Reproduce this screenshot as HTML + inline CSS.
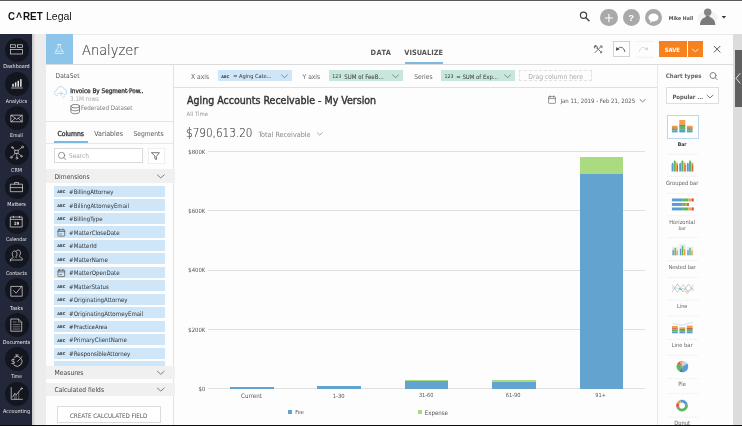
<!DOCTYPE html><html><head><meta charset="utf-8"><title>Analyzer</title><style>
*{box-sizing:border-box;margin:0;padding:0}
html,body{width:742px;height:426px;overflow:hidden;background:#fdfdfd;font-family:'DejaVu Sans Condensed','Liberation Sans',sans-serif;color:#444}
.a{position:absolute;white-space:nowrap}
.t{position:absolute;white-space:nowrap;line-height:1;transform:translateY(-50%)}
svg{position:absolute;overflow:visible}
</style></head><body><div id="root" style="position:absolute;left:0;top:0;width:742px;height:426px;will-change:transform">
<div class="a" style="left:0;top:0;width:742px;height:1px;background:#5a5a5a"></div>
<div class="a" style="left:0;top:424.6px;width:742px;height:1.4px;background:#0c0c0c"></div>
<div class="a" style="left:32px;top:34px;width:710px;height:1px;background:#ebebeb"></div>
<div class="t" id="t0" style="left:7.80px;top:16.30px;font-size:10.6px;color:#111;font-weight:bold;font-family:'Liberation Sans',sans-serif;letter-spacing:0.000px;transform-origin:0 50%;transform:translateY(-50%) scaleX(0.9143);">C</div>
<div class="t" id="t1" style="left:15.70px;top:17.40px;font-size:13.5px;color:#111;font-weight:bold;font-family:'Liberation Sans',sans-serif;letter-spacing:0.000px;transform-origin:0 50%;transform:translateY(-50%) scaleX(0.7731);">^</div>
<div class="t" id="t2" style="left:22.90px;top:16.30px;font-size:10.6px;color:#111;font-weight:bold;font-family:'Liberation Sans',sans-serif;letter-spacing:0.000px;transform-origin:0 50%;transform:translateY(-50%) scaleX(0.9298);">RET</div>
<div class="t" id="t3" style="left:46.00px;top:16.30px;font-size:10.6px;color:#111;font-family:'Liberation Sans',sans-serif;letter-spacing:0.000px;transform-origin:0 50%;transform:translateY(-50%) scaleX(0.9914);">Legal</div>
<div class="a" style="left:0;top:34px;width:32px;height:391px;background:#222839"></div>
<div class="a" style="left:32px;top:34px;width:3px;height:391px;background:linear-gradient(90deg,#c8c8c8,#e6e6e6)"></div>
<div class="a" style="left:35px;top:34px;width:11px;height:391px;background:#ececec"></div>
<div class="a" style="left:4.5px;top:37.60px;width:24px;height:24px;border-radius:50%;background:#13161e"></div>
<div class="t" id="t4" style="left:16.50px;top:67.00px;font-size:5.4px;color:#e8e8e8;letter-spacing:0.000px;transform:translate(-50%,-50%);">Dashboard</div>
<div class="a" style="left:4.5px;top:72.00px;width:24px;height:24px;border-radius:50%;background:#13161e"></div>
<div class="t" id="t5" style="left:16.50px;top:101.60px;font-size:5.25px;color:#e8e8e8;letter-spacing:0.000px;transform:translate(-50%,-50%);">Analytics</div>
<div class="a" style="left:4.5px;top:106.40px;width:24px;height:24px;border-radius:50%;background:#13161e"></div>
<div class="t" id="t6" style="left:16.50px;top:135.90px;font-size:5.13px;color:#e8e8e8;letter-spacing:0.000px;transform:translate(-50%,-50%);">Email</div>
<div class="a" style="left:4.5px;top:140.80px;width:24px;height:24px;border-radius:50%;background:#13161e"></div>
<div class="t" id="t7" style="left:16.50px;top:170.60px;font-size:5.42px;color:#e8e8e8;letter-spacing:0.000px;transform:translate(-50%,-50%);">CRM</div>
<div class="a" style="left:4.5px;top:175.20px;width:24px;height:24px;border-radius:50%;background:#13161e"></div>
<div class="t" id="t8" style="left:16.50px;top:205.00px;font-size:5.44px;color:#e8e8e8;letter-spacing:0.000px;transform:translate(-50%,-50%);">Matters</div>
<div class="a" style="left:4.5px;top:209.60px;width:24px;height:24px;border-radius:50%;background:#13161e"></div>
<div class="t" id="t9" style="left:16.50px;top:240.40px;font-size:5.17px;color:#e8e8e8;letter-spacing:0.000px;transform:translate(-50%,-50%);">Calendar</div>
<div class="a" style="left:4.5px;top:244.00px;width:24px;height:24px;border-radius:50%;background:#13161e"></div>
<div class="t" id="t10" style="left:16.50px;top:273.80px;font-size:5.27px;color:#e8e8e8;letter-spacing:0.000px;transform:translate(-50%,-50%);">Contacts</div>
<div class="a" style="left:4.5px;top:278.40px;width:24px;height:24px;border-radius:50%;background:#13161e"></div>
<div class="t" id="t11" style="left:16.50px;top:308.60px;font-size:5.36px;color:#e8e8e8;letter-spacing:0.000px;transform:translate(-50%,-50%);">Tasks</div>
<div class="a" style="left:4.5px;top:312.80px;width:24px;height:24px;border-radius:50%;background:#13161e"></div>
<div class="t" id="t12" style="left:16.50px;top:343.00px;font-size:5.35px;color:#e8e8e8;letter-spacing:0.000px;transform:translate(-50%,-50%);">Documents</div>
<div class="a" style="left:4.5px;top:347.20px;width:24px;height:24px;border-radius:50%;background:#13161e"></div>
<div class="t" id="t13" style="left:16.50px;top:377.40px;font-size:5.01px;color:#e8e8e8;letter-spacing:0.000px;transform:translate(-50%,-50%);">Time</div>
<div class="a" style="left:4.5px;top:381.60px;width:24px;height:24px;border-radius:50%;background:#13161e"></div>
<div class="t" id="t14" style="left:16.50px;top:411.90px;font-size:5.36px;color:#e8e8e8;letter-spacing:0.000px;transform:translate(-50%,-50%);">Accounting</div>
<div class="a" style="left:45.5px;top:34.2px;width:27.5px;height:29.8px;background:#8dc4ea"></div>
<div class="t" id="t15" style="left:82.40px;top:50.20px;font-size:14.6px;color:#444;font-family:'DejaVu Sans Light','DejaVu Sans','Liberation Sans',sans-serif;letter-spacing:0.000px;transform-origin:0 50%;transform:translateY(-50%) scaleX(0.8911);-webkit-text-stroke:0.18px #4a4a4a;">Analyzer</div>
<div class="a" style="left:46px;top:64px;width:687px;height:1px;background:#dcdcdc"></div>
<div class="t" id="t16" style="left:370.60px;top:53.20px;font-size:7.36px;color:#555;font-weight:bold;letter-spacing:0.366px;">DATA</div>
<div class="t" id="t17" style="left:404.30px;top:53.20px;font-size:7.36px;color:#555;font-weight:bold;letter-spacing:0.013px;">VISUALIZE</div>
<div class="a" style="left:404.5px;top:62px;width:38.5px;height:2px;background:#7db8e2"></div>
<div class="a" style="left:732.6px;top:34px;width:9.4px;height:391px;background:#dcdcdc"></div>
<div class="a" style="left:735px;top:49.9px;width:7px;height:57px;background:#606060"></div>
<div class="a" style="left:612.8px;top:41.4px;width:16.9px;height:15.9px;border:1px solid #d2d2d2;background:#fff"></div>
<div class="a" style="left:658.8px;top:41.4px;width:28px;height:15.5px;background:#f5821f"></div>
<div class="a" style="left:687.8px;top:41.4px;width:15.5px;height:15.5px;background:#f5821f"></div>
<div class="t" id="t18" style="left:672.30px;top:50.50px;font-size:5.88px;color:#fff;font-weight:bold;letter-spacing:-0.000px;transform:translate(-50%,-50%);">SAVE</div>
<div class="a" style="left:600.4px;top:9.200000000000001px;width:17.2px;height:17.2px;border-radius:50%;background:#a9a9a9"></div>
<div class="a" style="left:622.6px;top:9.200000000000001px;width:17.2px;height:17.2px;border-radius:50%;background:#a9a9a9"></div>
<div class="a" style="left:644.8px;top:9.200000000000001px;width:17.2px;height:17.2px;border-radius:50%;background:#a9a9a9"></div>
<div class="t" id="t19" style="left:668.80px;top:18.90px;font-size:5.22px;color:#505050;font-weight:bold;letter-spacing:-0.012px;">Mike Hall</div>
<div class="a" style="left:172.5px;top:65px;width:1px;height:360px;background:#e2e2e2"></div>
<div class="t" id="t20" style="left:55.60px;top:75.70px;font-size:6.6px;color:#555;letter-spacing:0.000px;">DataSet</div>
<div class="t" id="t21" style="left:70.20px;top:90.70px;font-size:6.35px;color:#333;letter-spacing:0.000px;-webkit-text-stroke:0.3px #333;">Invoice By Segment Pow..</div>
<div class="t" id="t22" style="left:70.00px;top:99.00px;font-size:6.32px;color:#aaa;letter-spacing:0.000px;">3.1M rows</div>
<div class="t" id="t23" style="left:81.00px;top:107.50px;font-size:6.17px;color:#777;letter-spacing:0.000px;">Federated Dataset</div>
<div class="a" style="left:46px;top:121px;width:127px;height:1px;background:#e4e4e4"></div>
<div class="t" id="t24" style="left:57.40px;top:133.60px;font-size:6.8px;color:#333;letter-spacing:0.000px;-webkit-text-stroke:0.3px #333;">Columns</div>
<div class="t" id="t25" style="left:94.30px;top:133.60px;font-size:7.01px;color:#555;letter-spacing:-0.000px;">Variables</div>
<div class="t" id="t26" style="left:133.40px;top:133.60px;font-size:6.69px;color:#555;letter-spacing:0.000px;">Segments</div>
<div class="a" style="left:54px;top:140.5px;width:34px;height:2px;background:#7db8e2"></div>
<div class="a" style="left:46px;top:142.5px;width:127px;height:1px;background:#e8e8e8"></div>
<div class="a" style="left:54px;top:148.2px;width:89.4px;height:15.3px;border:1px solid #dadada;background:#fff"></div>
<div class="t" id="t27" style="left:69.00px;top:156.00px;font-size:6.48px;color:#aaa;letter-spacing:0.000px;">Search</div>
<div class="a" style="left:147.5px;top:148px;width:17px;height:15.5px;border:1px solid #efefef;background:#fff"></div>
<div class="a" style="left:46px;top:169.4px;width:129px;height:13.6px;background:#f0f0f0"></div>
<div class="t" id="t28" style="left:54.50px;top:177.20px;font-size:6.68px;color:#444;letter-spacing:0.000px;">Dimensions</div>
<div class="a" style="left:54px;top:185.80px;width:111px;height:11.3px;background:#cfe6f8"></div>
<div class="t" id="t29" style="left:69.10px;top:191.90px;font-size:6.03px;color:#333;letter-spacing:0.000px;">#BillingAttorney</div>
<div class="t" id="t30" style="left:57.30px;top:191.90px;font-size:3.91px;color:#333;font-weight:bold;letter-spacing:0.000px;">ABC</div>
<div class="a" style="left:54px;top:199.28px;width:111px;height:11.3px;background:#cfe6f8"></div>
<div class="t" id="t31" style="left:69.10px;top:206.38px;font-size:6.08px;color:#333;letter-spacing:0.000px;">#BillingAttorneyEmail</div>
<div class="t" id="t32" style="left:57.30px;top:206.38px;font-size:3.91px;color:#333;font-weight:bold;letter-spacing:0.000px;">ABC</div>
<div class="a" style="left:54px;top:212.76px;width:111px;height:11.3px;background:#cfe6f8"></div>
<div class="t" id="t33" style="left:69.10px;top:218.86px;font-size:6.0px;color:#333;letter-spacing:0.000px;">#BillingType</div>
<div class="t" id="t34" style="left:57.30px;top:218.86px;font-size:3.91px;color:#333;font-weight:bold;letter-spacing:0.000px;">ABC</div>
<div class="a" style="left:54px;top:226.24px;width:111px;height:11.3px;background:#cfe6f8"></div>
<div class="t" id="t35" style="left:69.10px;top:233.34px;font-size:6.09px;color:#333;letter-spacing:0.000px;">#MatterCloseDate</div>
<div class="a" style="left:54px;top:239.72px;width:111px;height:11.3px;background:#cfe6f8"></div>
<div class="t" id="t36" style="left:69.10px;top:245.82px;font-size:6.08px;color:#333;letter-spacing:0.000px;">#MatterId</div>
<div class="t" id="t37" style="left:57.30px;top:245.82px;font-size:3.91px;color:#333;font-weight:bold;letter-spacing:0.000px;">ABC</div>
<div class="a" style="left:54px;top:253.20px;width:111px;height:11.3px;background:#cfe6f8"></div>
<div class="t" id="t38" style="left:69.10px;top:260.30px;font-size:6.09px;color:#333;letter-spacing:0.000px;">#MatterName</div>
<div class="t" id="t39" style="left:57.30px;top:260.30px;font-size:3.91px;color:#333;font-weight:bold;letter-spacing:0.000px;">ABC</div>
<div class="a" style="left:54px;top:266.68px;width:111px;height:11.3px;background:#cfe6f8"></div>
<div class="t" id="t40" style="left:69.10px;top:272.78px;font-size:6.12px;color:#333;letter-spacing:0.000px;">#MatterOpenDate</div>
<div class="a" style="left:54px;top:280.16px;width:111px;height:11.3px;background:#cfe6f8"></div>
<div class="t" id="t41" style="left:69.10px;top:287.26px;font-size:6.05px;color:#333;letter-spacing:0.000px;">#MatterStatus</div>
<div class="t" id="t42" style="left:57.30px;top:287.26px;font-size:3.91px;color:#333;font-weight:bold;letter-spacing:0.000px;">ABC</div>
<div class="a" style="left:54px;top:293.64px;width:111px;height:11.3px;background:#cfe6f8"></div>
<div class="t" id="t43" style="left:69.10px;top:299.74px;font-size:6.07px;color:#333;letter-spacing:0.000px;">#OriginatingAttorney</div>
<div class="t" id="t44" style="left:57.30px;top:299.74px;font-size:3.91px;color:#333;font-weight:bold;letter-spacing:0.000px;">ABC</div>
<div class="a" style="left:54px;top:307.12px;width:111px;height:11.3px;background:#cfe6f8"></div>
<div class="t" id="t45" style="left:69.10px;top:314.22px;font-size:6.12px;color:#333;letter-spacing:0.000px;">#OriginatingAttorneyEmail</div>
<div class="t" id="t46" style="left:57.30px;top:314.22px;font-size:3.91px;color:#333;font-weight:bold;letter-spacing:0.000px;">ABC</div>
<div class="a" style="left:54px;top:320.60px;width:111px;height:11.3px;background:#cfe6f8"></div>
<div class="t" id="t47" style="left:69.10px;top:326.70px;font-size:5.94px;color:#333;letter-spacing:0.000px;">#PracticeArea</div>
<div class="t" id="t48" style="left:57.30px;top:326.70px;font-size:3.91px;color:#333;font-weight:bold;letter-spacing:0.000px;">ABC</div>
<div class="a" style="left:54px;top:334.08px;width:111px;height:11.3px;background:#cfe6f8"></div>
<div class="t" id="t49" style="left:69.10px;top:340.18px;font-size:6.08px;color:#333;letter-spacing:0.000px;">#PrimaryClientName</div>
<div class="t" id="t50" style="left:57.30px;top:341.18px;font-size:3.91px;color:#333;font-weight:bold;letter-spacing:0.000px;">ABC</div>
<div class="a" style="left:54px;top:347.56px;width:111px;height:11.3px;background:#cfe6f8"></div>
<div class="t" id="t51" style="left:69.10px;top:353.66px;font-size:6.14px;color:#333;letter-spacing:0.000px;">#ResponsibleAttorney</div>
<div class="t" id="t52" style="left:57.30px;top:353.66px;font-size:3.91px;color:#333;font-weight:bold;letter-spacing:0.000px;">ABC</div>
<div class="a" style="left:54px;top:361.04px;width:111px;height:5.5px;background:#cfe6f8"></div>
<div class="a" style="left:46px;top:366px;width:129.3px;height:13.4px;background:#f0f0f0"></div>
<div class="t" id="t53" style="left:54.50px;top:372.60px;font-size:6.77px;color:#444;letter-spacing:0.000px;">Measures</div>
<div class="a" style="left:46px;top:379.4px;width:126.5px;height:3.5px;background:#fdfdfd"></div>
<div class="a" style="left:46px;top:382.9px;width:129.3px;height:12.8px;background:#f0f0f0"></div>
<div class="t" id="t54" style="left:54.50px;top:390.40px;font-size:6.64px;color:#444;letter-spacing:0.000px;">Calculated fields</div>
<div class="a" style="left:57.3px;top:406.3px;width:103.4px;height:16.5px;border:1px solid #dcdcdc;background:#fff"></div>
<div class="t" id="t55" style="left:108.60px;top:416.40px;font-size:6.19px;color:#555;letter-spacing:0.000px;transform:translate(-50%,-50%);">CREATE CALCULATED FIELD</div>
<div class="a" style="left:174px;top:87px;width:484px;height:1px;background:#e0e0e0"></div>
<div class="t" id="t56" style="left:191.00px;top:77.30px;font-size:6.73px;color:#666;letter-spacing:0.000px;">X axis</div>
<div class="a" style="left:217.9px;top:70.2px;width:73.8px;height:10.6px;background:#cfe6f8"></div>
<div class="t" id="t57" style="left:221.30px;top:77.30px;font-size:3.87px;color:#333;font-weight:bold;letter-spacing:0.000px;">ABC</div>
<div class="t" id="t58" style="left:233.20px;top:77.30px;font-size:5.58px;color:#333;letter-spacing:0.000px;">= Aging Cate...</div>
<div class="t" id="t59" style="left:302.60px;top:77.30px;font-size:6.67px;color:#666;letter-spacing:0.000px;">Y axis</div>
<div class="a" style="left:329px;top:70.2px;width:73.6px;height:10.6px;background:#c7e6dc"></div>
<div class="t" id="t60" style="left:332.30px;top:77.30px;font-size:5.22px;color:#333;letter-spacing:-0.029px;">123</div>
<div class="t" id="t61" style="left:344.20px;top:77.30px;font-size:6.1px;color:#333;letter-spacing:0.000px;">SUM of FeeB...</div>
<div class="t" id="t62" style="left:414.20px;top:77.30px;font-size:6.65px;color:#666;letter-spacing:0.000px;">Series</div>
<div class="a" style="left:441.4px;top:70.2px;width:73.5px;height:10.6px;background:#c7e6dc"></div>
<div class="t" id="t63" style="left:444.60px;top:77.30px;font-size:5.22px;color:#333;letter-spacing:-0.029px;">123</div>
<div class="t" id="t64" style="left:456.20px;top:77.30px;font-size:5.96px;color:#333;letter-spacing:0.000px;">= SUM of Exp...</div>
<div class="a" style="left:518.5px;top:70px;width:73.5px;height:11px;border:1px dashed #e2e2e2"></div>
<div class="t" id="t65" style="left:528.30px;top:77.10px;font-size:6.75px;color:#aaa;letter-spacing:0.000px;">Drag column here</div>
<div class="t" id="t66" style="left:186.60px;top:101.30px;font-size:10.9px;color:#333;letter-spacing:0.000px;transform-origin:0 50%;transform:translateY(-50%) scaleX(0.9684);-webkit-text-stroke:0.4px #333;">Aging Accounts Receivable - My Version</div>
<div class="t" id="t67" style="left:186.60px;top:114.00px;font-size:5.95px;color:#999;letter-spacing:-0.000px;">All Time</div>
<div class="t" id="t68" style="left:185.50px;top:132.60px;font-size:12.2px;color:#444;font-family:'DejaVu Sans Light','DejaVu Sans','Liberation Sans',sans-serif;letter-spacing:0.000px;transform-origin:0 50%;transform:translateY(-50%) scaleX(0.8575);-webkit-text-stroke:0.18px #4a4a4a;">$790,613.20</div>
<div class="t" id="t69" style="left:258.40px;top:135.00px;font-size:7.2px;color:#888;letter-spacing:0.000px;">Total Receivable</div>
<div class="t" id="t70" style="left:560.40px;top:101.40px;font-size:6.01px;color:#555;letter-spacing:0.000px;">Jan 11, 2019 - Feb 21, 2025</div>
<div class="a" style="left:208.2px;top:151.0px;width:436.6px;height:1px;background:#e0e0e0"></div>
<div class="t" id="t71" style="left:205.30px;top:152.50px;font-size:5.9px;color:#555;letter-spacing:0.000px;transform:translate(-100%,-50%);">$800K</div>
<div class="a" style="left:208.2px;top:210.2px;width:436.6px;height:1px;background:#e0e0e0"></div>
<div class="t" id="t72" style="left:205.30px;top:211.70px;font-size:5.9px;color:#555;letter-spacing:0.000px;transform:translate(-100%,-50%);">$600K</div>
<div class="a" style="left:208.2px;top:269.5px;width:436.6px;height:1px;background:#e0e0e0"></div>
<div class="t" id="t73" style="left:205.30px;top:271.00px;font-size:5.9px;color:#555;letter-spacing:0.000px;transform:translate(-100%,-50%);">$400K</div>
<div class="a" style="left:208.2px;top:328.8px;width:436.6px;height:1px;background:#e0e0e0"></div>
<div class="t" id="t74" style="left:205.30px;top:331.30px;font-size:5.9px;color:#555;letter-spacing:0.000px;transform:translate(-100%,-50%);">$200K</div>
<div class="a" style="left:208.2px;top:388.1px;width:436.6px;height:1px;background:#e0e0e0"></div>
<div class="t" id="t75" style="left:205.30px;top:389.60px;font-size:5.9px;color:#555;letter-spacing:0.000px;transform:translate(-100%,-50%);">$0</div>
<div class="a" style="left:230.1px;top:386.6px;width:43.8px;height:2.1px;background:#62a3d0"></div>
<div class="a" style="left:317.4px;top:386.3px;width:43.7px;height:2.4px;background:#62a3d0"></div>
<div class="a" style="left:405px;top:380.8px;width:43.2px;height:7.9px;background:#62a3d0"></div>
<div class="a" style="left:405px;top:380.3px;width:43.2px;height:0.5px;background:#abdb80"></div>
<div class="a" style="left:491.8px;top:380px;width:43.8px;height:1.5px;background:#abdb80"></div>
<div class="a" style="left:491.8px;top:381.5px;width:43.8px;height:7.2px;background:#62a3d0"></div>
<div class="a" style="left:579.6px;top:157.2px;width:43.5px;height:16.4px;background:#abdb80"></div>
<div class="a" style="left:579.6px;top:173.6px;width:43.5px;height:215.1px;background:#62a3d0"></div>
<div class="t" id="t76" style="left:251.50px;top:396.30px;font-size:6.17px;color:#555;letter-spacing:0.000px;transform:translate(-50%,-50%);">Current</div>
<div class="t" id="t77" style="left:338.70px;top:397.30px;font-size:5.79px;color:#555;letter-spacing:0.000px;transform:translate(-50%,-50%);">1-30</div>
<div class="t" id="t78" style="left:426.20px;top:396.30px;font-size:5.59px;color:#555;letter-spacing:0.000px;transform:translate(-50%,-50%);">31-60</div>
<div class="t" id="t79" style="left:513.20px;top:396.30px;font-size:5.67px;color:#555;letter-spacing:0.000px;transform:translate(-50%,-50%);">61-90</div>
<div class="t" id="t80" style="left:600.60px;top:396.30px;font-size:5.59px;color:#555;letter-spacing:0.000px;transform:translate(-50%,-50%);">91+</div>
<div class="a" style="left:287.8px;top:410px;width:4.2px;height:4.2px;background:#62a3d0"></div>
<div class="t" id="t81" style="left:295.20px;top:413.20px;font-size:5.54px;color:#555;letter-spacing:0.000px;">Fee</div>
<div class="a" style="left:418.2px;top:410px;width:4.2px;height:4.2px;background:#abdb80"></div>
<div class="t" id="t82" style="left:424.70px;top:413.20px;font-size:6.1px;color:#555;letter-spacing:0.000px;">Expense</div>
<div class="a" style="left:657px;top:65px;width:1px;height:360px;background:#e8e8e8"></div>
<div class="t" id="t83" style="left:665.80px;top:76.00px;font-size:6.05px;color:#666;font-weight:bold;letter-spacing:0.000px;">Chart types</div>
<div class="a" style="left:666.3px;top:87.4px;width:53px;height:17px;border:1px solid #dedede;background:#fff"></div>
<div class="t" id="t84" style="left:672.40px;top:97.50px;font-size:5.89px;color:#5a5a5a;font-weight:bold;letter-spacing:0.000px;">Popular ...</div>
<div class="a" style="left:666.5px;top:114.7px;width:32.2px;height:24px;border:1px solid #b9d8f0;background:#fff"></div>
<div class="t" id="t85" style="left:682.20px;top:145.00px;font-size:5.13px;color:#333;font-weight:bold;letter-spacing:0.000px;transform:translate(-50%,-50%);">Bar</div>
<div class="t" id="t86" style="left:682.20px;top:183.60px;font-size:5.75px;color:#666;letter-spacing:0.000px;transform:translate(-50%,-50%);">Grouped bar</div>
<div class="t" id="t87" style="left:682.20px;top:223.00px;font-size:5.62px;color:#666;letter-spacing:0.000px;transform:translate(-50%,-50%);">Horizontal</div>
<div class="t" id="t88" style="left:682.20px;top:228.80px;font-size:5.09px;color:#666;letter-spacing:0.000px;transform:translate(-50%,-50%);">bar</div>
<div class="t" id="t89" style="left:682.20px;top:267.80px;font-size:5.58px;color:#666;letter-spacing:0.000px;transform:translate(-50%,-50%);">Nested bar</div>
<div class="t" id="t90" style="left:682.20px;top:306.80px;font-size:5.49px;color:#666;letter-spacing:0.000px;transform:translate(-50%,-50%);">Line</div>
<div class="t" id="t91" style="left:682.20px;top:345.60px;font-size:5.67px;color:#666;letter-spacing:-0.000px;transform:translate(-50%,-50%);">Line bar</div>
<div class="t" id="t92" style="left:682.20px;top:384.80px;font-size:5.81px;color:#666;letter-spacing:0.000px;transform:translate(-50%,-50%);">Pie</div>
<div class="t" id="t93" style="left:682.20px;top:423.80px;font-size:5.81px;color:#666;letter-spacing:0.000px;transform:translate(-50%,-50%);">Donut</div>
<svg style="left:0;top:0.4px" width="742" height="426" viewBox="0 0 742 426" fill="none" stroke="#dcdcdc" stroke-width="0.72" stroke-linecap="round" stroke-linejoin="round"><g stroke-linejoin="miter" stroke-width="0.7"><rect x="10.5" y="44.8" width="5" height="2.8"/><rect x="17.4" y="44.8" width="5" height="2.8"/><rect x="10.5" y="49.4" width="11.9" height="4.6"/></g><path d="M11.5 88h10.8"/><g fill="#e4e4e4" stroke="none"><rect x="12.3" y="83.8" width="1.5" height="3"/><rect x="14.9" y="82.3" width="1.5" height="4.5"/><rect x="17.5" y="80.8" width="1.5" height="6"/><rect x="20.1" y="79.2" width="1.5" height="7.6"/></g><rect x="11.2" y="115.2" width="11" height="6.6"/><path d="M11.2 115.2l5.5 4.2 5.5-4.2M11.2 121.8l4-3.6M22.2 121.8l-4-3.6" stroke-width="0.7"/><rect x="15.1" y="150.3" width="3.1" height="3.1"/><g stroke-width="0.6"><path d="M15.1 150.3L12.9 148M18.2 150.3l3.5-2.7M15.1 153.4l-3.2 3.3M16.8 153.4v3.8M18.2 153.4l2.6 2.2"/><circle cx="12.3" cy="147.4" r="0.8"/><circle cx="22.5" cy="147" r="0.9"/><circle cx="11.2" cy="157.4" r="0.9"/><circle cx="16.9" cy="158.2" r="0.9"/><circle cx="21.4" cy="156.2" r="0.8"/></g><rect x="10.7" y="184.2" width="11.8" height="7.5"/><path d="M14.6 184.2v-1.7h4v1.7M10.7 187.6h11.8" stroke-width="0.7"/><rect x="10.7" y="217" width="11.5" height="10"/><path d="M10.7 219.4h11.5M13.5 216.2v1.5M19.4 216.2v1.5" stroke-width="0.7"/><g stroke-width="0.7"><path d="M10.4 261v-1.2c0-1 1.6-1.4 2.6-2 .5-.4.3-1 0-1.4-.6-.8-.8-1.6-.8-2.6 0-1.6 1-2.8 2.4-2.8s2.400 1.200 2.400 2.800c0 1-.2 1.800-.8 2.600-.3.400-.5 1 0 1.400"/><path d="M16 251.500c.4-.9 1.100-1.500 2.100-1.500 1.400 0 2.400 1.200 2.400 2.800 0 1-.2 1.800-.8 2.600-.3.400-.5 1 0 1.400 1 .6 2.600 1 2.600 2v1.200h-12"/></g><rect x="11.2" y="286.4" width="11" height="9.8"/><path d="M13.6 290.600l2.600 2.600 5.600-7"/><path d="M11.2 319h7.300l3.200 3.200v9h-10.500z"/><path d="M18.500 319v3.200h3.200M13.200 322h3M13.200 324.600h6.600M13.200 326.800h6.600M13.200 329h6.600" stroke-width="0.45"/><path d="M14.300 357.200a5 5 0 1 1 0 8.400" stroke-width="0.75"/><path d="M17.600 361.400l2.600-2.600M15.600 355h2.600M16.900 355v1.300M21.300 357.300l.8-.8" stroke-width="0.7"/><path d="M11.200 387.700v11.600h11.200"/><path d="M12.600 397l2.200-3.600 1.400 1.500 5-6" stroke-width="0.7"/><circle cx="21.600" cy="388.400" r="0.7" stroke-width="0.6"/><path d="M14.800 393.400v5.900M16.200 394.900v4.400M18.700 392v7.300" stroke-width="0.4"/></svg>
<div class="t" id="t94" style="left:16.50px;top:223.90px;font-size:4.4px;color:#e4e4e4;font-weight:bold;letter-spacing:0.000px;transform:translate(-50%,-50%);">19</div>
<div class="t" id="t95" style="left:11.00px;top:362.20px;font-size:7.6px;color:#dcdcdc;letter-spacing:0.000px;">$</div>
<svg style="left:0;top:0" width="742" height="426" viewBox="0 0 742 426" fill="none" stroke-linecap="round" stroke-linejoin="round"><circle cx="583.5" cy="15.3" r="3.1" stroke="#444" stroke-width="1.2"/><path d="M585.900 17.700l3.100 3.100" stroke="#444" stroke-width="1.5"/><path d="M605.200 18h7.400M608.900 14.300v7.400" stroke="#fff" stroke-width="1.1"/><path d="M653.500 13.600c-2.900 0-5 1.700-5 3.900 0 1.300.8 2.400 2 3.100l-.6 2.300 2.500-1.600c.4.100.7.100 1.100.100 2.900 0 5-1.700 5-3.900s-2.100-3.900-5-3.900z" fill="#fff"/><ellipse cx="707.800" cy="17.500" rx="10" ry="6.500" fill="#f3f3f3"/><circle cx="707.700" cy="12.300" r="3.700" fill="#858585"/><path d="M700 24.900c0-4.200 2.400-6.600 5.200-7.700l.9-1.300h3.200l.9 1.300c2.800 1.100 5.200 3.500 5.200 7.700z" fill="#7b7b7b"/><path d="M721.600 16l2.300 2.600 2.300-2.600z" fill="#333"/><g stroke="#6a6a6a" stroke-width="1" fill="none"><path d="M595 52.600l6-6M600.200 46.200l1.400-.4.600.600-.4 1.400"/><path d="M595.200 46.600l1.300-.6 1 1-.6 1.300M597 48l4.600 4.600"/><path d="M594.600 47.800c-.5-1.200.3-2.200 1.400-2.200M600.800 52.900l.9-.9" stroke-width="1.200"/></g><path d="M617.600 49.200C619.800 46.300 623.600 46.400 624.800 51.500" stroke="#444" stroke-width="0.9"/><path d="M615.800 50.700l.7-3.700 2.900 2.400z" fill="#444"/><path d="M637 41.500h17M637 57.300h17" stroke="#e6e6e6" stroke-width="0.6" stroke-dasharray="1.200 1"/><path d="M646.300 49.200C644.200 46.500 640.600 46.600 639.400 51.300" stroke="#d2d2d2" stroke-width="0.9"/><path d="M648.100 50.600l-.7-3.600-2.900 2.300z" fill="#d2d2d2"/><path d="M692.400 49.300l2.900 2.300 2.900-2.300" stroke="#fff" stroke-width="0.8"/><path d="M714.200 46.300l5.800 5.800M720 46.300l-5.800 5.800" stroke="#444" stroke-width="0.9"/><path d="M740 73.500l-4 4.800 4 4.800" stroke="#fff" stroke-width="0.8"/></svg>
<div class="t" id="t96" style="left:631.10px;top:18.10px;font-size:9.5px;color:#fff;font-weight:bold;font-family:'Liberation Sans',sans-serif;letter-spacing:0.000px;transform:translate(-50%,-50%);">?</div>
<svg style="left:0;top:0" width="742" height="426" viewBox="0 0 742 426" fill="none" stroke-linecap="round" stroke-linejoin="round"><g stroke="#f4faff" stroke-width="0.7"><path d="M57.500 44.400h3.400M58.100 44.400v3.200l-3 4.800c-.3.600 0 1.100.7 1.100h6.800c.7 0 1-.5.700-1.100l-3-4.800v-3.200"/><path d="M56 51.200h6.400" stroke-width="0.6"/></g><path d="M57.500 95.500c-1.800 0-3-1.200-3-2.700 0-1.400 1-2.500 2.400-2.700.2-2 1.800-3.500 3.800-3.500 1.700 0 3.100 1 3.600 2.600 1.400.2 2.400 1.300 2.400 2.800 0 1.600-1.200 2.800-2.800 2.800" stroke="#a9d0ee" stroke-width="0.8"/><path d="M58 93.500h4.500M60.500 91.800l2 1.700-2 1.700M62.500 96.600l1 1.200 1-1.200" stroke="#9cc3e0" stroke-width="0.6"/><g stroke="#666" stroke-width="0.8"><ellipse cx="75.200" cy="106.200" rx="4.300" ry="1.700"/><path d="M70.900 106.200v5.800c0 .9 1.900 1.700 4.300 1.700s4.300-.8 4.300-1.700v-5.800M70.900 109.100c0 .9 1.900 1.700 4.300 1.700s4.300-.8 4.300-1.700"/></g><path d="M124.700 90.600l1.900 1.900 1.900-1.900" stroke="#555" stroke-width="0.9"/><circle cx="61.600" cy="155.400" r="3.100" stroke="#777" stroke-width="0.8"/><path d="M63.900 157.700l2 2" stroke="#777" stroke-width="0.8"/><path d="M151.800 152.700h7.600l-3 3.600v3.300l-1.600-.9v-2.400z" stroke="#555" stroke-width="0.8"/><path d="M157.400 174.9l3.400 3 3.400-3" stroke="#666" stroke-width="0.8"/><path d="M157.400 371.3l3.400 3 3.400-3" stroke="#666" stroke-width="0.8"/><path d="M157.400 388.1l3.400 3 3.400-3" stroke="#666" stroke-width="0.8"/><g stroke="#444" stroke-width="0.65"><rect x="58" y="229.74" width="6.700" height="6.400" rx="0.7"/><path d="M58 231.44h6.700M59.800 228.84v1.500M62.900 228.84v1.500M60 234.04h1.400"/></g><g stroke="#444" stroke-width="0.65"><rect x="58" y="270.18" width="6.700" height="6.400" rx="0.7"/><path d="M58 271.88h6.700M59.800 269.28v1.500M62.900 269.28v1.500M60 274.48h1.400"/></g><path d="M281.5 74.900l3 2.700 3-2.700" stroke="#5a6a70" stroke-width="0.7"/><path d="M392.6 74.900l3 2.700 3-2.700" stroke="#5a6a70" stroke-width="0.7"/><path d="M504.6 74.900l3 2.700 3-2.700" stroke="#5a6a70" stroke-width="0.7"/><path d="M317.400 132.900l2.400 2.200 2.400-2.200" stroke="#888" stroke-width="0.7"/><g stroke="#6e6e6e" stroke-width="0.7"><rect x="548.600" y="96.600" width="6.800" height="6.800" rx="0.6"/><path d="M548.600 98.600h6.800M550.300 95.800v1.500M553.700 95.800v1.500"/></g><path d="M640 99.500l2.600 2.400 2.600-2.400" stroke="#555" stroke-width="0.8"/><circle cx="713" cy="75.500" r="3" stroke="#666" stroke-width="0.8"/><path d="M715.200 77.700l2 2" stroke="#666" stroke-width="0.8"/><path d="M707 95.200l3 2.700 3-2.700" stroke="#555" stroke-width="0.8"/></svg>
<svg style="left:0;top:0" width="742" height="426" viewBox="0 0 742 426" fill="none" stroke-linecap="butt"><rect x="671.9" y="125.70" width="5.7" height="1.68" fill="#f0a04b"/><rect x="671.9" y="127.38" width="5.7" height="1.34" fill="#d9534f"/><rect x="671.9" y="128.72" width="5.7" height="2.01" fill="#5cb85c"/><rect x="671.9" y="130.72" width="5.7" height="1.68" fill="#5b9bd5"/><rect x="679.3" y="120.00" width="6.0" height="4.71" fill="#f0a04b"/><rect x="679.3" y="124.71" width="6.0" height="1.24" fill="#d9534f"/><rect x="679.3" y="125.95" width="6.0" height="3.35" fill="#5cb85c"/><rect x="679.3" y="129.30" width="6.0" height="3.10" fill="#5b9bd5"/><rect x="686.9" y="125.70" width="5.7" height="1.68" fill="#f0a04b"/><rect x="686.9" y="127.38" width="5.7" height="1.34" fill="#d9534f"/><rect x="686.9" y="128.72" width="5.7" height="2.01" fill="#5cb85c"/><rect x="686.9" y="130.72" width="5.7" height="1.68" fill="#5b9bd5"/><path d="M667 154.2h32" stroke="#e2e2e2" stroke-width="0.6" stroke-dasharray="1.2 0.8"/><path d="M667 176.3h32" stroke="#e2e2e2" stroke-width="0.6" stroke-dasharray="1.2 0.8"/><path d="M667 193.3h32" stroke="#e2e2e2" stroke-width="0.6" stroke-dasharray="1.2 0.8"/><path d="M667 215.8h32" stroke="#e2e2e2" stroke-width="0.6" stroke-dasharray="1.2 0.8"/><path d="M667 237.6h32" stroke="#e2e2e2" stroke-width="0.6" stroke-dasharray="1.2 0.8"/><path d="M667 260.7h32" stroke="#e2e2e2" stroke-width="0.6" stroke-dasharray="1.2 0.8"/><path d="M667 277.5h32" stroke="#e2e2e2" stroke-width="0.6" stroke-dasharray="1.2 0.8"/><path d="M667 300.2h32" stroke="#e2e2e2" stroke-width="0.6" stroke-dasharray="1.2 0.8"/><path d="M667 316h32" stroke="#e2e2e2" stroke-width="0.6" stroke-dasharray="1.2 0.8"/><path d="M667 339.4h32" stroke="#e2e2e2" stroke-width="0.6" stroke-dasharray="1.2 0.8"/><path d="M667 355.2h32" stroke="#e2e2e2" stroke-width="0.6" stroke-dasharray="1.2 0.8"/><path d="M667 378.6h32" stroke="#e2e2e2" stroke-width="0.6" stroke-dasharray="1.2 0.8"/><path d="M667 393.6h32" stroke="#e2e2e2" stroke-width="0.6" stroke-dasharray="1.2 0.8"/><path d="M667 417.1h32" stroke="#e2e2e2" stroke-width="0.6" stroke-dasharray="1.2 0.8"/><path d="M671.6 171.500v-7.5l1-1.500 1 1.500v7.5z" fill="#5b9bd5"/><path d="M673.8 171.500v-10.0l1-1.500 1 1.500v10.0z" fill="#5cb85c"/><path d="M676.0 171.500v-8.0l1-1.500 1 1.500v8.0z" fill="#f0a04b"/><path d="M677.0 171.500v-6l.5-1 .5 1v6z" fill="#d9534f"/><path d="M679.2 171.500v-7.5l1-1.500 1 1.500v7.5z" fill="#5b9bd5"/><path d="M681.4 171.500v-10.0l1-1.500 1 1.500v10.0z" fill="#5cb85c"/><path d="M683.6 171.500v-8.0l1-1.500 1 1.500v8.0z" fill="#f0a04b"/><path d="M684.6 171.500v-6l.5-1 .5 1v6z" fill="#d9534f"/><path d="M686.8 171.500v-7.5l1-1.500 1 1.500v7.5z" fill="#5b9bd5"/><path d="M689.0 171.500v-10.0l1-1.500 1 1.500v10.0z" fill="#5cb85c"/><path d="M691.2 171.500v-8.0l1-1.500 1 1.500v8.0z" fill="#f0a04b"/><path d="M692.2 171.500v-6l.5-1 .5 1v6z" fill="#d9534f"/><rect x="671.900" y="198.5" width="10.300" height="2.900" fill="#5b9bd5"/><rect x="682.200" y="198.5" width="6.3" height="2.900" fill="#5cb85c"/><rect x="688.5" y="198.5" width="5.1" height="2.900" fill="#f0a04b"/><rect x="692.0" y="198.5" width="1.600" height="2.900" fill="#d9534f"/><rect x="671.900" y="203" width="10.300" height="2.900" fill="#5b9bd5"/><rect x="682.200" y="203" width="3.6" height="2.900" fill="#5cb85c"/><rect x="685.8" y="203" width="3.0" height="2.900" fill="#f0a04b"/><rect x="687.2" y="203" width="1.600" height="2.900" fill="#d9534f"/><rect x="671.900" y="207.5" width="10.300" height="2.900" fill="#5b9bd5"/><rect x="682.200" y="207.5" width="6.3" height="2.900" fill="#5cb85c"/><rect x="688.5" y="207.5" width="5.1" height="2.900" fill="#f0a04b"/><rect x="692.0" y="207.5" width="1.600" height="2.900" fill="#d9534f"/><rect x="672" y="246.8" width="6.400" height="8.5" fill="#e4e9ec"/><rect x="672.5" y="250.20" width="1.400" height="5.10" fill="#5b9bd5"/><rect x="674.5" y="248.08" width="1.400" height="7.22" fill="#5cb85c"/><rect x="676.5" y="250.62" width="1.400" height="4.68" fill="#f0a04b"/><rect x="679.4" y="244.3" width="6.400" height="11" fill="#e4e9ec"/><rect x="679.9" y="248.70" width="1.400" height="6.60" fill="#5b9bd5"/><rect x="681.9" y="245.95" width="1.400" height="9.35" fill="#5cb85c"/><rect x="683.9" y="249.25" width="1.400" height="6.05" fill="#f0a04b"/><rect x="686.8" y="246.8" width="6.400" height="8.5" fill="#e4e9ec"/><rect x="687.3" y="250.20" width="1.400" height="5.10" fill="#5b9bd5"/><rect x="689.3" y="248.08" width="1.400" height="7.22" fill="#5cb85c"/><rect x="691.3" y="250.62" width="1.400" height="4.68" fill="#f0a04b"/><g stroke-width="0.5" fill="none"><path d="M672 292l5.500-8 5.500 8 5.500-8 5 7" stroke="#999"/><path d="M672 284.500l5.500 8 5.500-8 5.500 8 5-8" stroke="#aaa"/><path d="M672 288h5l3 1.500 4-1 4 2.500 5.500-3" stroke="#8fb8d8"/><path d="M685 291l3 2.500" stroke="#f0a04b" stroke-width="0.8"/><path d="M679 288.500l3 1" stroke="#5cb85c" stroke-width="0.8"/></g><rect x="672.0" y="326.00" width="5.8" height="2.19" fill="#f0a04b"/><rect x="672.0" y="328.19" width="5.8" height="1.10" fill="#d9534f"/><rect x="672.0" y="329.29" width="5.8" height="2.19" fill="#5cb85c"/><rect x="672.0" y="331.48" width="5.8" height="1.83" fill="#5b9bd5"/><rect x="679.4" y="327.30" width="5.8" height="1.80" fill="#f0a04b"/><rect x="679.4" y="329.10" width="5.8" height="0.90" fill="#d9534f"/><rect x="679.4" y="330.00" width="5.8" height="1.80" fill="#5cb85c"/><rect x="679.4" y="331.80" width="5.8" height="1.50" fill="#5b9bd5"/><rect x="686.8" y="325.60" width="5.8" height="2.31" fill="#f0a04b"/><rect x="686.8" y="327.91" width="5.8" height="1.15" fill="#d9534f"/><rect x="686.8" y="329.06" width="5.8" height="2.31" fill="#5cb85c"/><rect x="686.8" y="331.38" width="5.8" height="1.92" fill="#5b9bd5"/><path d="M672.500 323.200l5.500 1.600 5 .3 4-1.200 6-1.700" stroke="#9cc3e0" stroke-width="0.5" fill="none"/><path d="M682.4 366.5L682.40 360.70A5.8 5.8 0 0 1 687.42 363.60z" fill="#bcd9ef"/><path d="M682.4 366.5L687.42 363.60A5.8 5.8 0 0 1 682.91 372.28z" fill="#5b9bd5"/><path d="M682.4 366.5L682.91 372.28A5.8 5.8 0 0 1 679.07 371.25z" fill="#3f7fb5"/><path d="M682.4 366.5L679.07 371.25A5.8 5.8 0 0 1 677.38 363.60z" fill="#5cb85c"/><path d="M682.4 366.5L677.38 363.60A5.8 5.8 0 0 1 679.50 361.48z" fill="#d9534f"/><path d="M682.4 366.5L679.50 361.48A5.8 5.8 0 0 1 682.40 360.70z" fill="#f0a04b"/><path d="M679.98 400.06A5.9 5.9 0 0 1 687.81 404.58L684.95 405.08A3 3 0 0 0 680.97 402.78z" fill="#5b9bd5"/><path d="M687.81 404.58A5.9 5.9 0 0 1 676.46 407.62L679.18 406.63A3 3 0 0 0 684.95 405.08z" fill="#5cb85c"/><path d="M676.46 407.62A5.9 5.9 0 0 1 676.89 402.65L679.40 404.10A3 3 0 0 0 679.18 406.63z" fill="#d9534f"/><path d="M676.89 402.65A5.9 5.9 0 0 1 679.98 400.06L680.97 402.78A3 3 0 0 0 679.40 404.10z" fill="#f0a04b"/></svg>
</div></body></html>
